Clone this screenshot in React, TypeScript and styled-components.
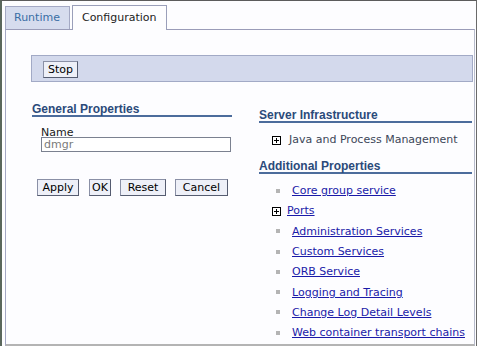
import styled, { createGlobalStyle } from "styled-components";

const GlobalStyle = createGlobalStyle`
    body{
        margin: 0;
        background: #ffffff;
        font-family: "DejaVu Sans", Verdana, sans-serif;
        font-size: 11px;
    }
`;

const Frame = styled.div`
    width: 477px;
    height: 346px;
    box-sizing: border-box;
    border-top: 1px solid #5c5c5c;
    border-left: 2px solid #5a675c;
    border-right: 1px solid #6a6a6a;
    padding: 4px 1px 0 3px;
    display: flex;
    flex-direction: column;
    background: #fdfdff;
`;

const TabRow = styled.div`
    display: flex;
    align-items: flex-end;
    gap: 2px;
    position: relative;
    z-index: 2;
`;

const Tab = styled.div<{ $active?: boolean }>`
    box-sizing: border-box;
    height: ${(p) => (p.$active ? "25px" : "23px")};
    margin-bottom: ${(p) => (p.$active ? "-1px" : "0")};
    padding: ${(p) => (p.$active ? "5px 9px 0 9px" : "4px 9px 0 8px")};
    border: 1px solid ${(p) => (p.$active ? "#9a9fba" : "#a4a9c4")};
    border-bottom: none;
    background: ${(p) => (p.$active ? "#fdfdff" : "#d6dcee")};
    color: ${(p) => (p.$active ? "#1c1c1c" : "#3a6ea5")};
    line-height: 13px;
`;

const Panel = styled.div`
    flex: 1;
    border-top: 1px solid #9a9cb8;
    border-left: 1px solid #a4a8c4;
    border-right: 1px solid #b8bccc;
    border-bottom: 2px solid #b4b4b4;
    padding: 25px 1px 0 25px;
`;

const StopBar = styled.div`
    box-sizing: border-box;
    height: 27px;
    border: 1px solid #a2aac6;
    background: #d3d9ec;
    padding: 5px 0 0 11px;
`;

const Button = styled.button<{ $w: number }>`
    box-sizing: border-box;
    width: ${(p) => p.$w}px;
    height: 17px;
    padding: 0;
    font-family: "DejaVu Sans", Verdana, sans-serif;
    font-size: 11px;
    line-height: 14px;
    color: #000000;
    background: #eef0f8;
    border: 1px solid #8a90a6;
    border-right-color: #555c70;
    border-bottom-color: #555c70;
    border-radius: 0;
`;

const Columns = styled.div`
    display: grid;
    grid-template-columns: 200px 213px;
    column-gap: 27px;
    padding-left: 1px;
    margin-top: 21px;
    align-items: start;
`;

const Column = styled.div<{ $offset: number }>`
    padding-top: ${(p) => p.$offset}px;
`;

const Heading = styled.h3<{ $gap?: number }>`
    margin: ${(p) => p.$gap ?? 0}px 0 0 0;
    font-family: "Liberation Sans", Arial, sans-serif;
    font-size: 12px;
    font-weight: bold;
    line-height: 12px;
    color: #2b4a7a;
    border-bottom: 2px solid #4c6c9c;
`;

const FieldLabel = styled.div`
    margin: 11px 0 0 9px;
    line-height: 9px;
    color: #1a1a1a;
`;

const TextInput = styled.input`
    box-sizing: border-box;
    display: block;
    width: 190px;
    height: 15px;
    margin: 0 0 0 9px;
    padding: 0 2px;
    border: 1px solid #7b8190;
    font-family: "DejaVu Sans", Verdana, sans-serif;
    font-size: 11px;
    color: #7a7a7a;
    background: #ffffff;
    outline: none;
`;

const ButtonRow = styled.div`
    display: flex;
    gap: 9px;
    margin: 27px 0 0 5px;
    > button:first-child{
        margin-right: 1px;
    }
`;

const Row = styled.div<{ $h: number }>`
    display: flex;
    align-items: center;
    height: ${(p) => p.$h}px;
    padding-left: 13px;
    line-height: 20px;
`;

const Bullet = styled.span`
    width: 4px;
    height: 4px;
    margin: -1px 12px 0 4px;
    background: #b4b4b4;
    flex-shrink: 0;
`;

const Plus = styled.svg<{ $gap: number }>`
    width: 9px;
    height: 9px;
    margin-right: ${(p) => p.$gap}px;
    flex-shrink: 0;
`;

const PlainText = styled.span`
    color: #3c4658;
`;

const Link = styled.a`
    color: #1a1aa8;
    text-decoration: underline;
    cursor: pointer;
`;

const PlusBox = ({ gap }: { gap: number }) => (
    <Plus $gap={gap} viewBox="0 0 9 9">
        <rect x="0.5" y="0.5" width="8" height="8" fill="#ffffff" stroke="#000000" />
        <path d="M2 4.5h5M4.5 2v5" stroke="#000000" />
    </Plus>
);

const links = [
    "Administration Services",
    "Custom Services",
    "ORB Service",
    "Logging and Tracing",
    "Change Log Detail Levels",
    "Web container transport chains",
];

export default function App() {
    return (
        <>
            <GlobalStyle />
            <Frame>
                <TabRow>
                    <Tab>Runtime</Tab>
                    <Tab $active>Configuration</Tab>
                </TabRow>
                <Panel>
                    <StopBar>
                        <Button $w={35}>Stop</Button>
                    </StopBar>
                    <Columns>
                        <Column $offset={0}>
                            <Heading>General Properties</Heading>
                            <FieldLabel>Name</FieldLabel>
                            <TextInput defaultValue="dmgr" />
                            <ButtonRow>
                                <Button $w={42}>Apply</Button>
                                <Button $w={22}>OK</Button>
                                <Button $w={46}>Reset</Button>
                                <Button $w={53}>Cancel</Button>
                            </ButtonRow>
                        </Column>
                        <Column $offset={6}>
                            <Heading>Server Infrastructure</Heading>
                            <Row $h={20} style={{ marginTop: 7 }}>
                                <PlusBox gap={8} />
                                <PlainText>Java and Process Management</PlainText>
                            </Row>
                            <Heading $gap={10}>Additional Properties</Heading>
                            <div style={{ marginTop: 7 }}>
                                <Row $h={20.3}>
                                    <Bullet />
                                    <Link>Core group service</Link>
                                </Row>
                                <Row $h={20.3}>
                                    <PlusBox gap={6} />
                                    <Link>Ports</Link>
                                </Row>
                                {links.map((item) => (
                                    <Row $h={20.3} key={item}>
                                        <Bullet />
                                        <Link>{item}</Link>
                                    </Row>
                                ))}
                            </div>
                        </Column>
                    </Columns>
                </Panel>
            </Frame>
        </>
    );
}
